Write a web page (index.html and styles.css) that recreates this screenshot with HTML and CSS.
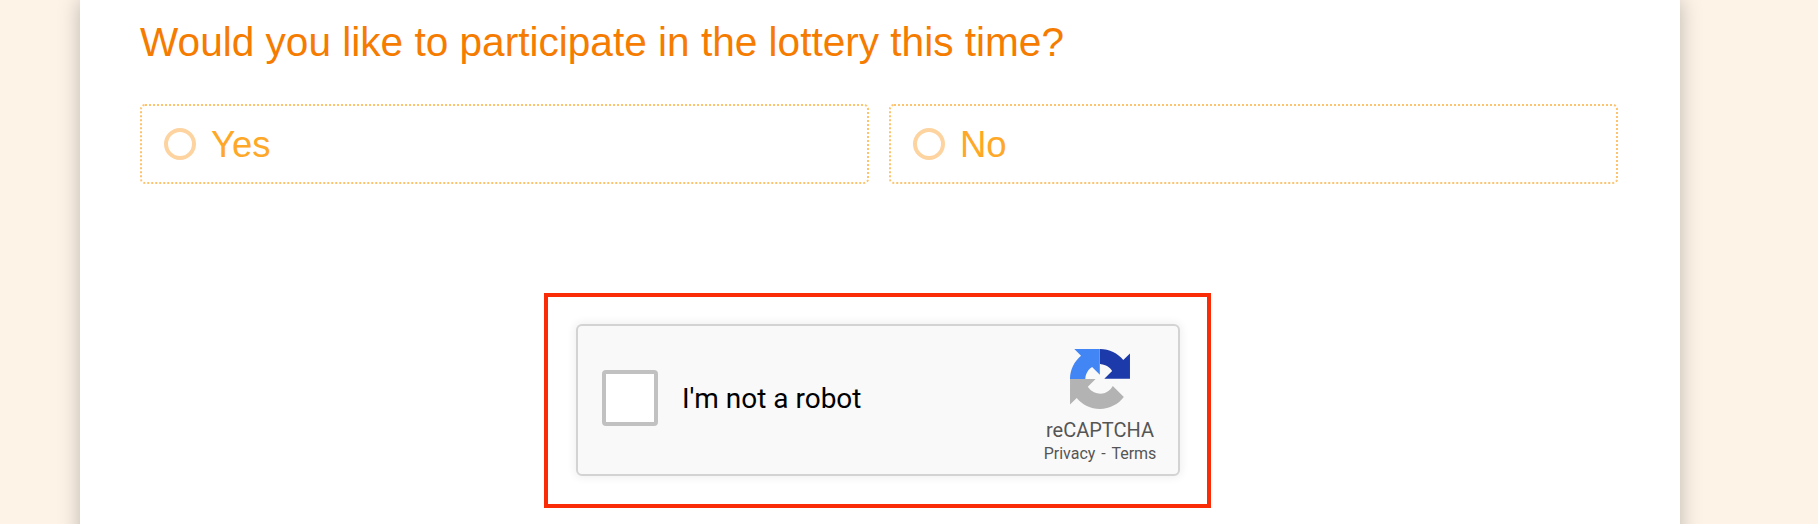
FILE: index.html
```html
<!DOCTYPE html>
<html lang="en">
<head>
    <meta charset="UTF-8">
    <title>Lottery</title>
    <link rel="stylesheet" href="styles.css">
</head>
<body>
    <main class="card">
        <h2 class="question">Would you like to participate in the lottery this time?</h2>
        <div class="options">
            <label class="option"><span class="radio"></span><span class="option-text">Yes</span></label>
            <label class="option"><span class="radio"></span><span class="option-text">No</span></label>
        </div>
        <div class="captcha-box">
            <div class="recaptcha">
                <span class="checkbox"></span>
                <span class="robot-label">I'm not a robot</span>
                <div class="brand">
                    <svg class="brand-logo" viewBox="0 0 64 64">
                        <path fill="#1c3aa9" d="M64 31.955l-.033-1.37V4.687l-7.16 7.16C50.948 4.674 42.033.093 32.05.093c-.1 0-.15 10-.1 16 .485 0 .86.057 1.135.163 4.976.393 9.288 3.14 11.828 7.124l-8.307 8.307c10.522-.04 22.4-.066 27.295.005"/>
                        <path fill="#4285f4" d="M31.862.094l-1.37.033H4.594l7.16 7.16C4.58 13.147 0 22.06 0 32.046h16.26c0-.485.057-.86.163-1.135.393-4.976 3.14-9.288 7.124-11.828l8.307 8.307C31.815 16.87 31.8 5 31.862.094"/>
                        <path fill="#b3b3b3" d="M.001 32.045l.033 1.37v25.898l7.16-7.16c5.86 7.173 14.774 11.754 24.76 11.754 10.4 0 19.622-4.96 25.458-12.64L45.674 39.41a15.55 15.55 0 0 1-4.754 5.334c-2.05 1.6-4.952 2.906-8.968 2.906-.485 0-.86-.057-1.135-.163-4.976-.393-9.288-3.14-11.828-7.124l8.307-8.307C17.773 32.096 5.897 32.122.001 32.05"/>
                    </svg>
                    <div class="brand-name">reCAPTCHA</div>
                    <div class="brand-links">Privacy - Terms</div>
                </div>
            </div>
        </div>
    </main>
</body>
</html>
```

FILE: styles.css
```css
html, body {
    height: 100%;
}

body {
    margin: 0;
    overflow: hidden;
    background-color: #fdf3e7;
    font-family: "Liberation Sans", Arial, sans-serif;
}

.card {
    width: 1478px;
    height: 100%;
    margin-left: 80px;
    padding: 18px 62px 0 60px;
    background: #fff;
    box-shadow: 0 0 20px rgba(0, 0, 0, .25);
}

.question {
    margin: 0 0 38px;
    color: #f57c00;
    font-size: 40.6px;
    font-weight: normal;
    line-height: 48px;
}

.options {
    display: flex;
    gap: 20px;
}

.option {
    flex: 1;
    display: flex;
    align-items: center;
    gap: 15px;
    height: 80px;
    padding-left: 22px;
    box-sizing: border-box;
    border: 2px dotted #fdc36d;
    border-radius: 5px;
    color: #ffa726;
    font-size: 36.5px;
}

.option-text {
    margin-top: 2px;
}

.radio {
    width: 32px;
    height: 32px;
    box-sizing: border-box;
    border: 4px solid #fdd3a0;
    border-radius: 50%;
}

.captcha-box {
    width: fit-content;
    margin: 109px 0 0 404px;
    padding: 27px 27px 28px 28px;
    border: 4px solid #fa2c08;
}

.recaptcha {
    display: flex;
    align-items: center;
    width: 604px;
    height: 152px;
    padding: 0 20px 0 24px;
    box-sizing: border-box;
    background: #f9f9f9;
    border: 2px solid #d3d3d3;
    border-radius: 6px;
    box-shadow: 0 0 8px 2px rgba(0, 0, 0, .06);
    font-family: Roboto, Arial, sans-serif;
}

.checkbox {
    width: 56px;
    height: 56px;
    margin-bottom: 5px;
    box-sizing: border-box;
    background: #fff;
    border: 4px solid #c1c1c1;
    border-radius: 4px;
}

.robot-label {
    margin-left: 24px;
    margin-bottom: 3px;
    color: #000;
    font-size: 28px;
}

.brand {
    display: flex;
    flex-direction: column;
    align-items: center;
    width: 116px;
    margin-top: 13px;
    margin-left: auto;
    color: #555;
}

.brand-logo {
    width: 60px;
    height: 60px;
    margin-bottom: 9px;
}

.brand-name {
    font-size: 20px;
    line-height: 24px;
}

.brand-links {
    font-size: 16px;
    line-height: 23px;
    word-spacing: 2px;
}
```
